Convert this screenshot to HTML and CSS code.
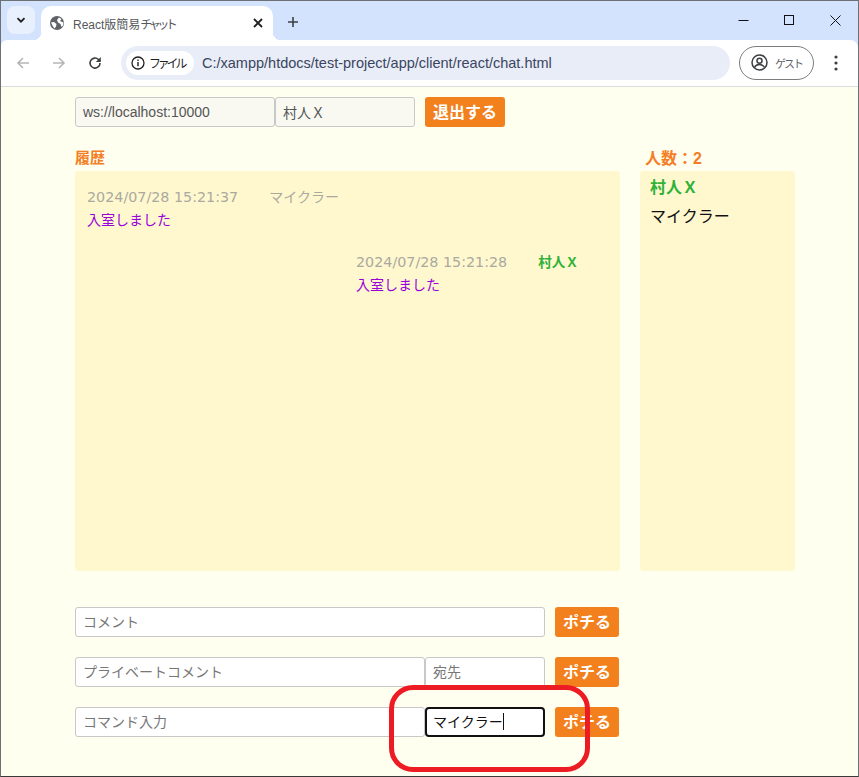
FILE: index.html
```html
<!DOCTYPE html>
<html lang="ja">
<head>
    <meta charset="UTF-8">
    <title>React版簡易チャット</title>
    <link rel="stylesheet" href="styles.css">
</head>
<body>
    <div class="window">
        <div class="tabstrip">
            <div class="tab-list">
                <svg width="12" height="12" viewBox="0 0 12 12"><path d="M2.5 4.2 6 7.7l3.5-3.5" fill="none" stroke="#1f1f1f" stroke-width="1.8"/></svg>
            </div>
            <div class="tab">
                <svg class="favicon" width="14" height="14" viewBox="0 0 14 14"><circle cx="7" cy="7" r="7" fill="#5f6368"/><path d="M1 6.500 4 6l2.500 2L6 10.500l-1.500 2-1.500-2ZM9 1.500 11.500 3 10 5l3.500 1.500-.5 3-1.500 1.500-1-3L8 6.500 7 4Z" fill="#fff"/></svg>
                <span class="tab-title">React版簡易<span class="narrow">チャット</span></span>
                <svg class="tab-close" width="10" height="10" viewBox="0 0 10 10"><path d="M1 1l8 8M9 1 1 9" stroke="#1f1f1f" stroke-width="1.800"/></svg>
            </div>
            <svg class="new-tab" width="12" height="12" viewBox="0 0 12 12"><path d="M6 1v10M1 6h10" stroke="#3c4043" stroke-width="1.600"/></svg>
            <div class="win-controls">
                <svg width="11" height="11" viewBox="0 0 11 11"><path d="M.5 5.500h10" stroke="#111" stroke-width="1"/></svg>
                <svg width="11" height="11" viewBox="0 0 11 11"><rect x=".5" y=".5" width="9" height="9" fill="none" stroke="#111"/></svg>
                <svg width="11" height="11" viewBox="0 0 11 11"><path d="M.5.500l10 10M10.500.500l-10 10" stroke="#111"/></svg>
            </div>
        </div>

        <div class="toolbar">
            <svg class="nav-btn" width="16" height="16" viewBox="0 0 16 16"><path d="M14 8H3M8 3 3 8l5 5" fill="none" stroke="#b4b6b9" stroke-width="1.600"/></svg>
            <svg class="nav-btn" width="16" height="16" viewBox="0 0 16 16"><path d="M2 8h11M8 3l5 5-5 5" fill="none" stroke="#b4b6b9" stroke-width="1.600"/></svg>
            <svg class="nav-btn" width="16" height="16" viewBox="0 0 16 16"><path d="M13 8a5 5 0 1 1-1.500-3.500L13 6" fill="none" stroke="#3c4043" stroke-width="1.600"/><path d="M13.800 2v5h-5z" fill="#3c4043"/></svg>
            <div class="address">
                <div class="chip">
                    <svg width="14" height="14" viewBox="0 0 14 14"><circle cx="7" cy="7" r="6" fill="none" stroke="#1f1f1f" stroke-width="1.300"/><path d="M7 6v4.200M7 3.500v1.400" stroke="#1f1f1f" stroke-width="1.400"/></svg>
                    <span class="chip-text">ファイル</span>
                </div>
                <span class="url">C:/xampp/htdocs/test-project/app/client/react/chat.html</span>
            </div>
            <div class="guest">
                <svg width="17" height="17" viewBox="0 0 17 17"><circle cx="8.500" cy="8.500" r="7.500" fill="none" stroke="#3c4043" stroke-width="1.500"/><circle cx="8.500" cy="6.800" r="2.500" fill="none" stroke="#3c4043" stroke-width="1.500"/><path d="M3.500 13.500c1-2.300 3-3 5-3s4 .7 5 3" fill="none" stroke="#3c4043" stroke-width="1.500"/></svg>
                <span class="guest-text">ゲスト</span>
            </div>
            <svg class="kebab" width="4" height="16" viewBox="0 0 4 16"><circle cx="2" cy="2" r="1.600" fill="#3c4043"/><circle cx="2" cy="8" r="1.600" fill="#3c4043"/><circle cx="2" cy="14" r="1.600" fill="#3c4043"/></svg>
        </div>

        <div class="page">
            <div class="connect-row">
                <input class="field field-ws" type="text" value="ws://localhost:10000">
                <input class="field field-name" type="text" value="村人Ｘ">
                <button class="btn btn-leave">退出する</button>
            </div>

            <div class="columns">
                <div class="col-history">
                    <div class="heading">履歴</div>
                    <div class="panel history">
                        <div class="msg">
                            <div class="msg-meta"><span>2024/07/28 15:21:37</span><span class="msg-name">マイクラー</span></div>
                            <div class="msg-text">入室しました</div>
                        </div>
                        <div class="msg msg-self">
                            <div class="msg-meta"><span>2024/07/28 15:21:28</span><span class="msg-name msg-name-self">村人Ｘ</span></div>
                            <div class="msg-text">入室しました</div>
                        </div>
                    </div>
                </div>
                <div class="col-members">
                    <div class="heading heading-members">人数：2</div>
                    <div class="panel members">
                        <div class="member member-self">村人Ｘ</div>
                        <div class="member">マイクラー</div>
                    </div>
                </div>
            </div>

            <div class="send-row">
                <input class="field field-full" type="text" placeholder="コメント">
                <button class="btn">ポチる</button>
            </div>
            <div class="send-row">
                <input class="field field-main" type="text" placeholder="プライベートコメント">
                <input class="field field-to" type="text" placeholder="宛先">
                <button class="btn">ポチる</button>
            </div>
            <div class="send-row">
                <input class="field field-main" type="text" placeholder="コマンド入力">
                <div class="field field-to field-focus">マイクラー<span class="caret"></span></div>
                <button class="btn">ポチる</button>
            </div>

            <div class="red-mark"></div>
        </div>
    </div>
</body>
</html>
```

FILE: styles.css
```css
* {
    box-sizing: border-box;
}
html, body {
    height: 100%;
}
body {
    margin: 0;
    font-family: "Liberation Sans", "Noto Sans CJK JP", sans-serif;
    overflow: hidden;
}
.window {
    height: 777px;
    display: flex;
    flex-direction: column;
    border: 1px solid #6e7073;
    border-bottom-color: #3a3a38;
    background: #d3e3fd;
}

/* tab strip */
.tabstrip {
    height: 39px;
    flex: none;
    display: flex;
    align-items: flex-end;
    background: #d3e3fd;
    padding-left: 6px;
}
.tab-list {
    width: 28px;
    height: 28px;
    margin-bottom: 6px;
    border-radius: 8px;
    background: #e8f0fe;
    display: flex;
    align-items: center;
    justify-content: center;
}
.tab {
    position: relative;
    width: 232px;
    height: 34px;
    margin-left: 6px;
    padding: 0 10px 0 9px;
    background: #fff;
    border-radius: 10px 10px 0 0;
    display: flex;
    align-items: center;
}
.tab::before,
.tab::after {
    content: "";
    position: absolute;
    bottom: 0;
    width: 8px;
    height: 8px;
}
.tab::before {
    left: -8px;
    background: radial-gradient(circle at 0 0, transparent 8px, #fff 8.5px);
}
.tab::after {
    right: -8px;
    background: radial-gradient(circle at 100% 0, transparent 8px, #fff 8.5px);
}
.tab-title {
    margin-left: 9px;
    flex: 1;
    font-size: 12px;
    color: #55575a;
}
.narrow {
    letter-spacing: -3.500px;
}
.new-tab {
    margin: 0 0 12px 14px;
}
.win-controls {
    margin-left: auto;
    height: 39px;
    padding-right: 17px;
    display: flex;
    align-items: center;
    gap: 35px;
}

/* toolbar */
.toolbar {
    height: 47px;
    flex: none;
    display: flex;
    align-items: center;
    background: #fff;
    border-bottom: 1px solid #dadce0;
    border-radius: 6px 8px 0 0;
    padding: 0 0 1px 14px;
}
.nav-btn {
    margin-right: 20px;
}
.address {
    width: 609px;
    height: 34px;
    margin-left: -2px;
    padding-left: 5px;
    border-radius: 17px;
    background: #e9edf7;
    display: flex;
    align-items: center;
}
.chip {
    width: 68px;
    height: 24px;
    padding-left: 5px;
    border-radius: 12px;
    background: #fff;
    display: flex;
    align-items: center;
    gap: 4px;
    font-size: 12px;
    color: #1f1f1f;
    white-space: nowrap;
}
.chip-text {
    letter-spacing: -3.200px;
}
.url {
    margin-left: 8px;
    font-size: 14.500px;
    color: #3a4560;
    white-space: nowrap;
}
.guest {
    width: 75px;
    height: 34px;
    margin-left: 9px;
    padding-left: 11px;
    border: 1px solid #7b7c7e;
    border-radius: 17px;
    display: flex;
    align-items: center;
    gap: 7px;
    font-size: 11px;
    color: #5f6368;
}
.guest-text {
    letter-spacing: -2px;
}
.kebab {
    margin-left: 20px;
}

/* page */
.page {
    position: relative;
    flex: 1;
    padding: 10px 0 0 74px;
    background: #ffffef;
}
.connect-row {
    display: flex;
    align-items: center;
}
.field {
    height: 30px;
    padding: 0 7px 1px;
    border: 1px solid #c8c8c8;
    border-radius: 3px;
    background: #fff;
    font-family: inherit;
    font-size: 14px;
    color: #555;
    outline: none;
}
.field::placeholder {
    color: #777;
}
.field-ws {
    width: 200px;
    background: #f9f9f2;
}
.field-name {
    width: 140px;
    background: #f9f9f2;
}
.btn {
    height: 30px;
    margin-left: 10px;
    padding: 0 8px 2px;
    border: none;
    border-radius: 3px;
    background: #f2801c;
    color: #fff;
    font-family: inherit;
    font-size: 16px;
    font-weight: bold;
}
.btn-leave {
    width: 80px;
}
.columns {
    margin-top: 22px;
    display: flex;
    gap: 20px;
}
.col-history {
    width: 545px;
}
.col-members {
    width: 155px;
}
.heading {
    height: 22px;
    font-size: 15px;
    font-weight: bold;
    line-height: 18px;
    color: #f47e25;
}
.heading-members {
    padding-left: 5px;
    font-size: 16px;
    line-height: 20px;
}
.panel {
    height: 400px;
    border-radius: 3px;
    background: #fff8cf;
}
.history {
    padding: 16px 12px;
}
.msg {
    height: 65px;
    font-family: "DejaVu Sans", "Noto Sans CJK JP", sans-serif;
    font-size: 14.300px;
}
.msg-self {
    padding-left: 269px;
}
.msg-meta {
    height: 20px;
    line-height: 20px;
    color: #aaa99f;
    display: flex;
    gap: 31px;
}
.msg-name {
    font-size: 14px;
}
.msg-name-self {
    font-weight: bold;
    font-size: 13.500px;
    color: #2fb239;
}
.msg-text {
    margin-top: 3px;
    font-size: 14px;
    line-height: 20px;
    color: #9a00d8;
}
.members {
    padding: 6px 10px;
    font-size: 16px;
    line-height: 22px;
}
.member {
    margin-bottom: 7px;
    color: #111;
}
.member-self {
    font-weight: bold;
    color: #2fb239;
}
.send-row {
    margin-top: 20px;
    display: flex;
    align-items: center;
}
.columns + .send-row {
    margin-top: 36px;
}
.field-full {
    width: 470px;
}
.field-main {
    width: 350px;
}
.field-to {
    width: 120px;
}
.field-focus {
    display: flex;
    align-items: center;
    border: 2px solid #111;
    border-radius: 4px;
    padding: 0 6px 2px;
    color: #111;
    background: #fff;
}
.caret {
    width: 1px;
    height: 17px;
    background: #111;
}

/* hand-drawn red box over the screenshot */
.red-mark {
    position: absolute;
    left: 388px;
    top: 598px;
    width: 201px;
    height: 87px;
    border: 5px solid #ed1c24;
    border-radius: 24px;
}
```
